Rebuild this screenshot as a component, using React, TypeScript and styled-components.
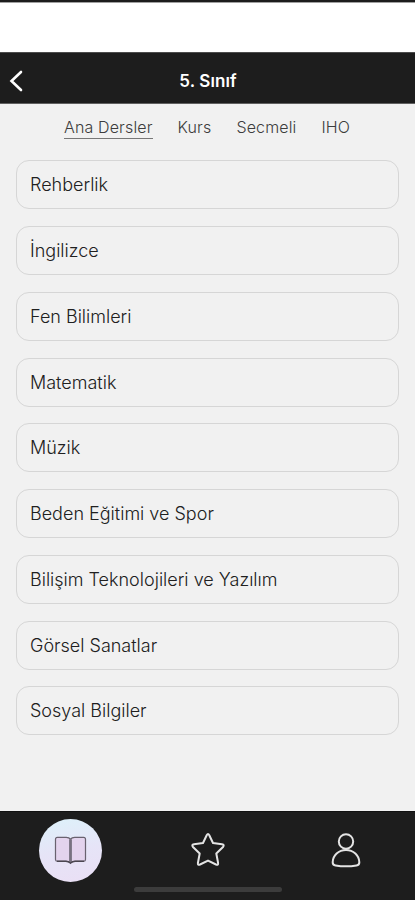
import React, { useState } from "react";
import styled, { createGlobalStyle } from "styled-components";

const GlobalStyle = createGlobalStyle`
  * { box-sizing: border-box; }
  body {
    margin: 0;
    background: #f1f1f1;
    font-family: Inter, "Liberation Sans", sans-serif;
  }
  button { font: inherit; border: 0; padding: 0; background: none; cursor: pointer; }
`;

const Screen = styled.div`
  display: flex;
  flex-direction: column;
  height: 900px;
  overflow: hidden;
  background: #f1f1f1;
`;

const StatusBar = styled.div`
  flex: none;
  height: 52px;
  background: #fff;
  border-top: 2px solid #1d1d1d;
  box-shadow: inset 0 1px 0 #a0a0a0;
`;

const Header = styled.header`
  flex: none;
  display: grid;
  grid-template-columns: 60px 1fr 60px;
  align-items: center;
  height: 52px;
  padding-top: 5px;
  background: #1d1d1d;
  border-top: 1px solid #4c4c4c;
  border-bottom: 1px solid #606060;
`;

const BackButton = styled.button`
  display: flex;
  padding-left: 9px;
`;

const Title = styled.h1`
  margin: 0;
  padding-left: 1px;
  text-align: center;
  color: #fff;
  font-size: 17px;
  line-height: 24px;
  font-weight: 600;
  letter-spacing: 0.1px;
`;

const Tabs = styled.nav`
  flex: none;
  display: flex;
  align-items: flex-start;
  gap: 25px;
  height: 56.4px;
  padding: 12px 0 0 64px;
`;

const Tab = styled.button<{ $active: boolean }>`
  height: 23px;
  border-bottom: 1px solid ${(p) => (p.$active ? "#777" : "transparent")};
  color: #3c3c3c;
  font-size: 16px;
  line-height: 21px;
  font-weight: 300;
  letter-spacing: 0.14px;
  white-space: nowrap;
`;

const Lessons = styled.ul`
  flex: 1;
  display: flex;
  flex-direction: column;
  gap: 16.75px;
  margin: 0;
  padding: 0 16px;
  list-style: none;
`;

const Lesson = styled.li`
  flex: none;
  display: flex;
  align-items: center;
  height: 49px;
  padding: 0 13px;
  border: 1px solid #d6d6d6;
  border-radius: 13px;
  color: #202020;
  font-size: 18px;
  font-weight: 300;
  letter-spacing: 0;
  white-space: nowrap;
`;

const BottomBar = styled.footer`
  flex: none;
  display: flex;
  flex-direction: column;
  align-items: center;
  height: 89px;
  background: #1d1d1d;
  border-top: 1px solid #111;
`;

const BottomNav = styled.nav`
  display: grid;
  grid-template-columns: repeat(3, 1fr);
  align-items: center;
  justify-items: center;
  width: 100%;
  height: 75px;
  padding: 1px 0 0 1px;
`;

const NavButton = styled.button<{ $active?: boolean }>`
  display: flex;
  align-items: center;
  justify-content: center;
  width: 63px;
  height: 63px;
  border-radius: 50%;
  background: ${(p) =>
    p.$active ? "linear-gradient(170deg, #def0fa 5%, #e6e4f7 50%, #eadff5 100%)" : "none"};
`;

const HomeIndicator = styled.div`
  width: 148px;
  height: 5px;
  border-radius: 3px;
  background: #3c3c3c;
`;

const tabs = ["Ana Dersler", "Kurs", "Secmeli", "IHO"];

const lessons = [
  "Rehberlik",
  "İngilizce",
  "Fen Bilimleri",
  "Matematik",
  "Müzik",
  "Beden Eğitimi ve Spor",
  "Bilişim Teknolojileri ve Yazılım",
  "Görsel Sanatlar",
  "Sosyal Bilgiler",
];

const BackIcon = () => (
  <svg width="16" height="22" viewBox="0 0 16 22" fill="none">
    <path d="M12 2 L2.5 11 L12 20" stroke="#fff" strokeWidth="2.6" strokeLinecap="round" />
  </svg>
);

const BookIcon = () => (
  <svg width="35" height="30" viewBox="0 0 36 32" fill="none">
    <path
      d="M18 4.5 Q16.5 2.5 13.5 2.5 H4 Q2 2.5 2 4.5 V26 Q2 28 4 28 H13.5 Q16.5 28 18 30 Q19.5 28 22.5 28 H32 Q34 28 34 26 V4.5 Q34 2.5 32 2.5 H22.5 Q19.5 2.5 18 4.5 Z"
      fill="#e3d3ed"
      stroke="#69626f"
      strokeWidth="1.3"
    />
    <path d="M18 4.5 V29" stroke="#77717f" strokeWidth="3" />
    <path d="M3.5 28 H13 Q16 28 18 30 Q20 28 23 28 H32.5" stroke="#4b4650" strokeWidth="1.5" />
  </svg>
);

const StarIcon = () => (
  <svg width="36" height="36" viewBox="0 0 36 36" fill="none">
    <path
      d="M16.7 3.2 Q18 1 19.3 3.2 L23 11 L32 12.2 Q34.8 12.8 33 15 L26.3 21.5 L28.1 31 Q28.4 33.6 26 32.5 L18 28.6 L10 32.5 Q7.6 33.6 7.9 31 L9.7 21.5 L3 15 Q1.2 12.800 4 12.2 L13 11 Z"
      stroke="#e4e4e4"
      strokeWidth="2"
      strokeLinejoin="round"
    />
  </svg>
);

const PersonIcon = () => (
  <svg width="32" height="36" viewBox="0 0 32 36" fill="none">
    <circle cx="16" cy="9.5" r="7.2" stroke="#e4e4e4" strokeWidth="2" />
    <path
      d="M16 18 C8.5 18 3 23.5 2.7 30 Q2.500 33 5.5 33.500 Q16 35.200 26.5 33.500 Q29.500 33 29.3 30 C29 23.500 23.500 18 16 18 Z"
      stroke="#e4e4e4"
      strokeWidth="2"
    />
  </svg>
);

export default function App() {
  const [activeTab, setActiveTab] = useState(tabs[0]);

  return (
    <>
      <GlobalStyle />
      <Screen>
        <StatusBar />
        <Header>
          <BackButton aria-label="Geri">
            <BackIcon />
          </BackButton>
          <Title>5. Sınıf</Title>
        </Header>
        <Tabs>
          {tabs.map((tab) => (
            <Tab key={tab} $active={tab === activeTab} onClick={() => setActiveTab(tab)}>
              {tab}
            </Tab>
          ))}
        </Tabs>
        <Lessons>
          {lessons.map((lesson) => (
            <Lesson key={lesson}>{lesson}</Lesson>
          ))}
        </Lessons>
        <BottomBar>
          <BottomNav>
            <NavButton $active aria-label="Dersler">
              <BookIcon />
            </NavButton>
            <NavButton aria-label="Favoriler">
              <StarIcon />
            </NavButton>
            <NavButton aria-label="Profil">
              <PersonIcon />
            </NavButton>
          </BottomNav>
          <HomeIndicator />
        </BottomBar>
      </Screen>
    </>
  );
}
